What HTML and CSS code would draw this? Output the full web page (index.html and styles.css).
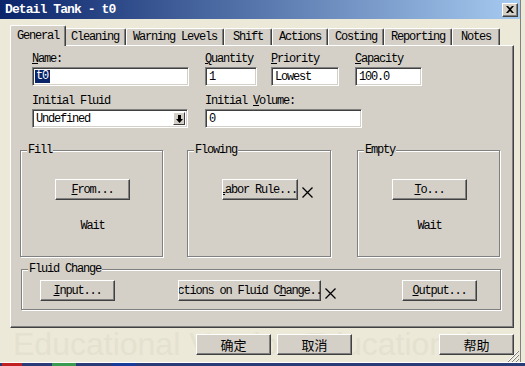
FILE: index.html
```html
<!DOCTYPE html>
<html lang="en">
<head>
    <meta charset="UTF-8">
    <meta name="viewport" content="width=device-width, initial-scale=1.0">
    <title>Detail Tank - t0</title>
    <link rel="stylesheet" href="styles.css">
</head>
<body>
    <div class="screen">
        <div class="window">
            <div class="titlebar">
                <span class="title">Detail Tank - t0</span>
                <span class="close">
                    <svg width="8" height="7" viewBox="0 0 8 7"><path d="M0 0h2l2 2 2-2h2L5 3.5 8 7H6L4 5 2 7H0l3-3.5z" fill="#000"/></svg>
                </span>
            </div>
            <div class="content">
                <div class="watermark">Educational Version Educational</div>

                <div class="tabs">
                    <span class="tab active">General</span>
                    <span class="tab">Cleaning</span>
                    <span class="tab">Warning Levels</span>
                    <span class="tab">Shift</span>
                    <span class="tab">Actions</span>
                    <span class="tab">Costing</span>
                    <span class="tab">Reporting</span>
                    <span class="tab">Notes</span>
                </div>

                <div class="panel">
                    <div class="row">
                        <div class="field w-name">
                            <label><u>N</u>ame:</label>
                            <div class="input"><span class="selected">t0</span></div>
                        </div>
                        <div class="field w-qty">
                            <label><u>Q</u>uantity</label>
                            <div class="input">1</div>
                        </div>
                        <div class="field w-pri">
                            <label><u>P</u>riority</label>
                            <div class="input">Lowest</div>
                        </div>
                        <div class="field w-cap">
                            <label><u>C</u>apacity</label>
                            <div class="input">100.0</div>
                        </div>
                    </div>
                    <div class="row row-2">
                        <div class="field w-fluid">
                            <label>Initial Fluid</label>
                            <div class="input combo">
                                <span>Undefined</span>
                                <span class="drop">
                                    <svg width="7" height="8" viewBox="0 0 7 8"><path d="M2 0h3v4h2L3.5 8 0 4h2z" fill="#000"/></svg>
                                </span>
                            </div>
                        </div>
                        <div class="field w-vol">
                            <label>Initial <u>V</u>olume:</label>
                            <div class="input">0</div>
                        </div>
                    </div>

                    <div class="groups">
                        <div class="group g-fill">
                            <span class="legend">Fill</span>
                            <button class="btn"><u>F</u>rom...</button>
                            <div class="status">Wait</div>
                        </div>
                        <div class="group g-flow">
                            <span class="legend">Flowing</span>
                            <div class="btn-line">
                                <button class="btn btn-labor"><span><u>L</u>abor Rule...</span></button>
                                <svg class="cross" width="11" height="11" viewBox="0 0 11 11"><path d="M0.5 0.5l10 10M10.5 0.5l-10 10" stroke="#000" stroke-width="1.3"/></svg>
                            </div>
                        </div>
                        <div class="group g-empty">
                            <span class="legend">Empty</span>
                            <button class="btn"><u>T</u>o...</button>
                            <div class="status">Wait</div>
                        </div>
                    </div>

                    <div class="group change">
                        <span class="legend">Fluid Change</span>
                        <button class="btn"><u>I</u>nput...</button>
                        <button class="btn btn-actions"><span>Actions on Fluid C<u>h</u>ange...</span></button>
                        <svg class="cross" width="11" height="11" viewBox="0 0 11 11"><path d="M0.5 0.5l10 10M10.5 0.5l-10 10" stroke="#000" stroke-width="1.3"/></svg>
                        <button class="btn btn-output"><u>O</u>utput...</button>
                    </div>
                </div>

                <div class="footer">
                    <button class="btn cjk btn-ok">确定</button>
                    <button class="btn cjk btn-cancel">取消</button>
                    <button class="btn cjk btn-help">帮助</button>
                </div>

                <svg class="grip" width="12" height="12" viewBox="0 0 12 12">
                    <path d="M11 1L1 11M11 5L5 11M11 9L9 11" stroke="#fff" stroke-width="1"/>
                    <path d="M12 1L1 12M12 5L5 12M12 9L9 12" stroke="#808080" stroke-width="1"/>
                </svg>
            </div>
        </div>
        <div class="edge"></div>
    </div>
    <div class="taskbar">
        <span class="task red"></span>
        <span class="task green"></span>
        <span class="task blue"></span>
    </div>
</body>
</html>
```

FILE: styles.css
```css
* {
    box-sizing: border-box;
}
body {
    margin: 0;
    width: 525px;
    height: 366px;
    overflow: hidden;
    background-color: #ECE9D8;
    font-family: "Liberation Mono", monospace;
    font-size: 12px;
    letter-spacing: -1.2px;
    color: #000;
}
.screen {
    display: flex;
    height: 362px;
}
.window {
    width: 520px;
    display: flex;
    flex-direction: column;
    background-color: #ECE9D8;
}
.edge {
    flex: 1;
    background-color: #ECE9D8;
    border-left: 1px solid #808080;
}

/* title bar */
.titlebar {
    height: 19px;
    display: flex;
    align-items: center;
    justify-content: space-between;
    padding: 0 2px 0 5px;
    background: linear-gradient(to right, #0A246A, #A6CAF0);
}
.title {
    color: #fff;
    font-weight: bold;
    font-size: 13px;
    letter-spacing: -0.9px;
}
.close {
    width: 16px;
    height: 14px;
    display: flex;
    align-items: center;
    justify-content: center;
    background-color: #D4D0C8;
    border-top: 1px solid #fff;
    border-left: 1px solid #fff;
    border-right: 1px solid #404040;
    border-bottom: 1px solid #404040;
    box-shadow: inset -1px -1px #808080;
}

.content {
    flex: 1;
    position: relative;
    z-index: 0;
    display: flex;
    flex-direction: column;
    padding: 6px 6px 0 10px;
}
.watermark {
    position: absolute;
    z-index: -1;
    left: 13px;
    top: 309px;
    font-family: "Liberation Sans", Arial, sans-serif;
    font-size: 32px;
    line-height: 32px;
    letter-spacing: 0;
    color: #E4E1D0;
    white-space: nowrap;
}

/* tabs */
.tabs {
    display: flex;
    align-items: flex-end;
    height: 20px;
    padding-left: 2px;
    position: relative;
    z-index: 1;
}
.tab {
    height: 17px;
    min-width: 48px;
    padding: 0 6px;
    display: flex;
    align-items: center;
    justify-content: center;
    white-space: nowrap;
    background-color: #D4D0C8;
    border-top: 1px solid #fff;
    border-left: 1px solid #fff;
    border-right: 1px solid #404040;
    box-shadow: inset -1px 0 #808080;
    border-radius: 2px 2px 0 0;
}
.tab.active {
    position: relative;
    z-index: 2;
    height: 21px;
    margin: 0 -2px -1px;
    padding-bottom: 1px;
}

.panel {
    height: 283px;
    background-color: #D4D0C8;
    border-top: 1px solid #fff;
    border-left: 1px solid #fff;
    border-right: 1px solid #404040;
    border-bottom: 1px solid #404040;
    box-shadow: inset -1px -1px #808080;
    padding: 7px 0 0 21px;
}

/* fields */
.row {
    display: flex;
}
.row-2 {
    margin-top: 9px;
}
.field label {
    display: block;
    height: 13px;
    line-height: 13px;
    margin-bottom: 1px;
    white-space: nowrap;
}
.w-name { width: 157px; }
.w-qty { width: 52px; margin-left: 16px; }
.w-pri { width: 68px; margin-left: 14px; }
.w-cap { width: 67px; margin-left: 16px; }
.w-fluid { width: 156px; }
.w-vol { width: 157px; margin-left: 17px; }

.input {
    height: 19px;
    display: flex;
    align-items: center;
    padding-left: 3px;
    white-space: nowrap;
    background-color: #fff;
    border-top: 1px solid #808080;
    border-left: 1px solid #808080;
    border-right: 1px solid #fff;
    border-bottom: 1px solid #fff;
    box-shadow: inset 1px 1px #404040, inset -1px -1px #D4D0C8;
}
.selected {
    background-color: #0A246A;
    color: #fff;
    padding: 0 2px 0 1px;
    margin-left: -1px;
    line-height: 13px;
}
.combo {
    justify-content: space-between;
    padding-right: 2px;
}
.drop {
    width: 12px;
    height: 13px;
    display: flex;
    align-items: center;
    justify-content: center;
    background-color: #D4D0C8;
    border-top: 1px solid #fff;
    border-left: 1px solid #fff;
    border-right: 1px solid #404040;
    border-bottom: 1px solid #404040;
}

/* group boxes */
.groups {
    display: flex;
    margin: 22px 0 0 -12px;
}
.group {
    position: relative;
    border: 1px solid #808080;
    box-shadow: inset 1px 1px #fff, 1px 1px #fff;
}
.legend {
    position: absolute;
    top: -7px;
    left: 6px;
    padding: 0 1px;
    line-height: 13px;
    background-color: #D4D0C8;
    white-space: nowrap;
}
.g-fill,
.g-flow,
.g-empty {
    height: 107px;
    padding: 28px 0 0 34px;
}
.g-fill { width: 143px; }
.g-flow { width: 144px; margin-left: 24px; }
.g-empty { width: 143px; margin-left: 26px; }
.status {
    width: 75px;
    margin-top: 20px;
    line-height: 13px;
    text-align: center;
}
.btn-line {
    display: flex;
    align-items: flex-start;
}
.cross {
    flex: none;
    margin: 8px 0 0 4px;
}

.change {
    width: 480px;
    height: 41px;
    margin: 12px 0 0 -11px;
    padding: 10px 0 0 18px;
    display: flex;
    align-items: flex-start;
}

/* buttons */
.btn {
    flex: none;
    width: 75px;
    height: 21px;
    padding: 0;
    display: flex;
    align-items: center;
    justify-content: center;
    overflow: hidden;
    white-space: nowrap;
    font: inherit;
    letter-spacing: inherit;
    color: #000;
    background-color: #D4D0C8;
    border-top: 1px solid #fff;
    border-left: 1px solid #fff;
    border-right: 1px solid #404040;
    border-bottom: 1px solid #404040;
    box-shadow: inset -1px -1px #808080;
}
.btn span {
    flex: none;
}
.btn-labor { width: 76px; }
.btn-labor span { padding-right: 4px; }
.btn-actions { width: 143px; margin-left: 63px; }
.btn-output { margin-left: 66px; }

.footer {
    display: flex;
    margin-top: 6px;
}
.cjk {
    font-family: "Noto Sans CJK SC", sans-serif;
    font-size: 13px;
    letter-spacing: 0;
}
.btn-ok { margin-left: 186px; }
.btn-cancel { margin-left: 6px; }
.btn-help { margin-left: auto; }

.grip {
    position: absolute;
    right: 1px;
    bottom: 0;
}

/* taskbar strip under the window */
.taskbar {
    height: 4px;
    display: flex;
    background-color: #2a3c78;
    border-top: 1px solid #fff;
}
.task {
    height: 3px;
}
.red { width: 20px; margin-left: 2px; background-color: #c02020; }
.green { width: 24px; margin-left: 30px; background-color: #3a9a50; }
.blue { width: 24px; margin-left: 36px; background-color: #183c9a; }
```
